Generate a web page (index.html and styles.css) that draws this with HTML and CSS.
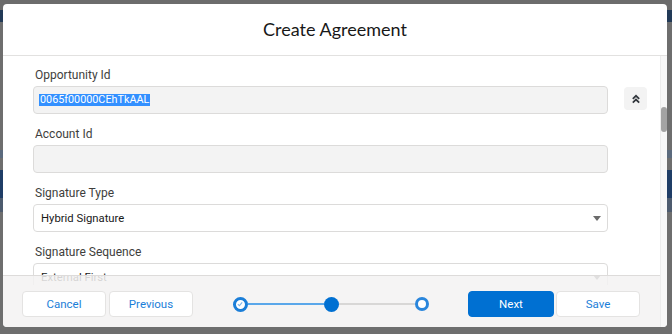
FILE: index.html
```html
<!DOCTYPE html>
<html>
<head>
<meta charset="utf-8">
<link rel="stylesheet" href="styles.css">
</head>
<body>
<div class="modal">
  <header class="modal-header">
    <h2 class="title">Create Agreement</h2>
  </header>
  <div class="modal-main">
    <div class="content">
      <div class="form">
        <div class="field">
          <div class="label">Opportunity Id</div>
          <div class="row">
            <div class="input disabled"><span class="sel">0065f00000CEhTkAAL</span></div>
            <button class="icon-btn" aria-label="Collapse">
              <svg width="10" height="10" viewBox="0 0 10 10"><path d="M1.8 4.8 L5 1.8 L8.2 4.8 M1.8 8.6 L5 5.6 L8.2 8.6" fill="none" stroke="#34393f" stroke-width="1.8"/></svg>
            </button>
          </div>
        </div>
        <div class="field">
          <div class="label">Account Id</div>
          <div class="row">
            <div class="input disabled"></div>
          </div>
        </div>
        <div class="field">
          <div class="label">Signature Type</div>
          <div class="row">
            <div class="input select"><span>Hybrid Signature</span><span class="caret"></span></div>
          </div>
        </div>
        <div class="field">
          <div class="label">Signature Sequence</div>
          <div class="row">
            <div class="input select"><span>External First</span><span class="caret"></span></div>
          </div>
        </div>
      </div>
      <footer class="footer">
        <div class="btn-group">
          <button class="btn neutral">Cancel</button>
          <button class="btn neutral">Previous</button>
        </div>
        <div class="progress">
          <span class="step done"><svg width="6" height="6" viewBox="0 0 6 6"><path d="M0.8 3.2 L2.4 4.6 L5.2 1.4" fill="none" stroke="#7fb6ea" stroke-width="1.1"/></svg></span>
          <span class="bar active"></span>
          <span class="step current"></span>
          <span class="bar"></span>
          <span class="step todo"></span>
        </div>
        <div class="btn-group">
          <button class="btn brand">Next</button>
          <button class="btn neutral">Save</button>
        </div>
      </footer>
    </div>
    <div class="scrollbar"><div class="thumb"></div></div>
  </div>
</div>
</body>
</html>
```

FILE: styles.css
```css
* { box-sizing: border-box; }
html, body { margin: 0; height: 334px; overflow: hidden; }
body {
  font-family: "Roboto", "Lato", sans-serif;
  padding: 4px 0 0 3px;
  background: linear-gradient(to bottom,
    #6c6c6c 0, #6c6c6c 10px,
    #223a57 10px, #223a57 22px,
    #6e6e6e 22px, #6e6e6e 150px,
    #5b6a7d 150px, #5b6a7d 158px,
    #6e6e6e 158px, #6e6e6e 170px,
    #1f3d66 170px, #1f3d66 198px,
    #4d5b6e 198px, #4d5b6e 212px,
    #6e6e6e 212px);
}
.modal {
  width: 664px;
  height: 323px;
  background: #fff;
  border-radius: 4px;
  display: flex;
  flex-direction: column;
  overflow: hidden;
}
.modal-header {
  height: 52px;
  border-bottom: 1px solid #e2e1e0;
  display: flex;
  align-items: center;
  justify-content: center;
  padding-bottom: 2px;
}
.title {
  margin: 0;
  font-family: "Lato", sans-serif;
  font-weight: 400;
  font-size: 18px;
  color: #181818;
}
.modal-main {
  flex: 1;
  min-height: 0;
  display: flex;
}
.content {
  flex: 1;
  min-width: 0;
  display: flex;
  flex-direction: column;
}
.form {
  flex: 1;
  min-height: 0;
  overflow: hidden;
  padding: 11px 0 0 30px;
}
.field { margin-bottom: 12px; }
.label {
  font-size: 12px;
  line-height: 16px;
  color: #3e3e3c;
  padding-left: 2px;
  margin-bottom: 3px;
}
.row { display: flex; align-items: flex-start; }
.input {
  width: 575px;
  height: 28px;
  border: 1px solid #dcdbda;
  border-radius: 4px;
  background: #fff;
  font-size: 11.3px;
  color: #181818;
  display: flex;
  align-items: center;
  padding: 0 6px 0 5px;
}
.input.disabled { background: #f3f3f3; }
.input.select { padding-left: 7px; justify-content: space-between; }
.sel {
  background: #3390ff;
  color: #fff;
  font-size: 10.8px;
  line-height: 12px;
  padding: 0 1px;
}
.caret {
  width: 0; height: 0;
  border-left: 4px solid transparent;
  border-right: 4px solid transparent;
  border-top: 5px solid #6b6b6b;
}
.icon-btn {
  margin-left: 16px;
  margin-top: 1px;
  width: 23px;
  height: 23px;
  border: 0;
  border-radius: 4px;
  background: #f3f3f3;
  padding: 0;
  display: flex;
  align-items: center;
  justify-content: center;
}
.footer {
  height: 52px;
  margin-top: -10px;
  background: rgba(243, 242, 242, 0.86);
  border-top: 1px solid #dddbda;
  padding: 15px 20px 10px 19px;
  display: flex;
  justify-content: space-between;
  align-items: flex-start;
}
.btn-group { display: flex; gap: 3px; }
.btn-group + .progress + .btn-group { gap: 2px; }
.btn {
  font-family: inherit;
  font-size: 11.5px;
  width: 84px;
  height: 26px;
  border-radius: 4px;
  border: 1px solid #e4e3e2;
  background: #fff;
  color: #1b7ed8;
  padding: 0;
}
.btn.brand {
  width: 86px;
  background: #0070d2;
  border-color: #0070d2;
  color: #fff;
}
.progress {
  display: flex;
  align-items: center;
  width: 196px;
  height: 26px;
}
.step {
  width: 15px;
  height: 15px;
  border-radius: 50%;
  flex: none;
  display: flex;
  align-items: center;
  justify-content: center;
}
.step.done { border: 3px solid #1b7ed8; background: #fff; }
.step.current { background: #0070d2; }
.step.todo { border: 3px solid #2a86dc; background: #fff; width: 14px; height: 14px; }
.bar { flex: 1; height: 2px; background: #d8d7d6; }
.bar.active { background: #5aa7ea; }
.scrollbar {
  width: 7px;
  background: #f7f7f7;
  border-left: 1px solid #ececec;
  padding-top: 51px;
}
.thumb {
  width: 6px;
  height: 25px;
  border-radius: 3px;
  background: #a3a3a3;
}
```
